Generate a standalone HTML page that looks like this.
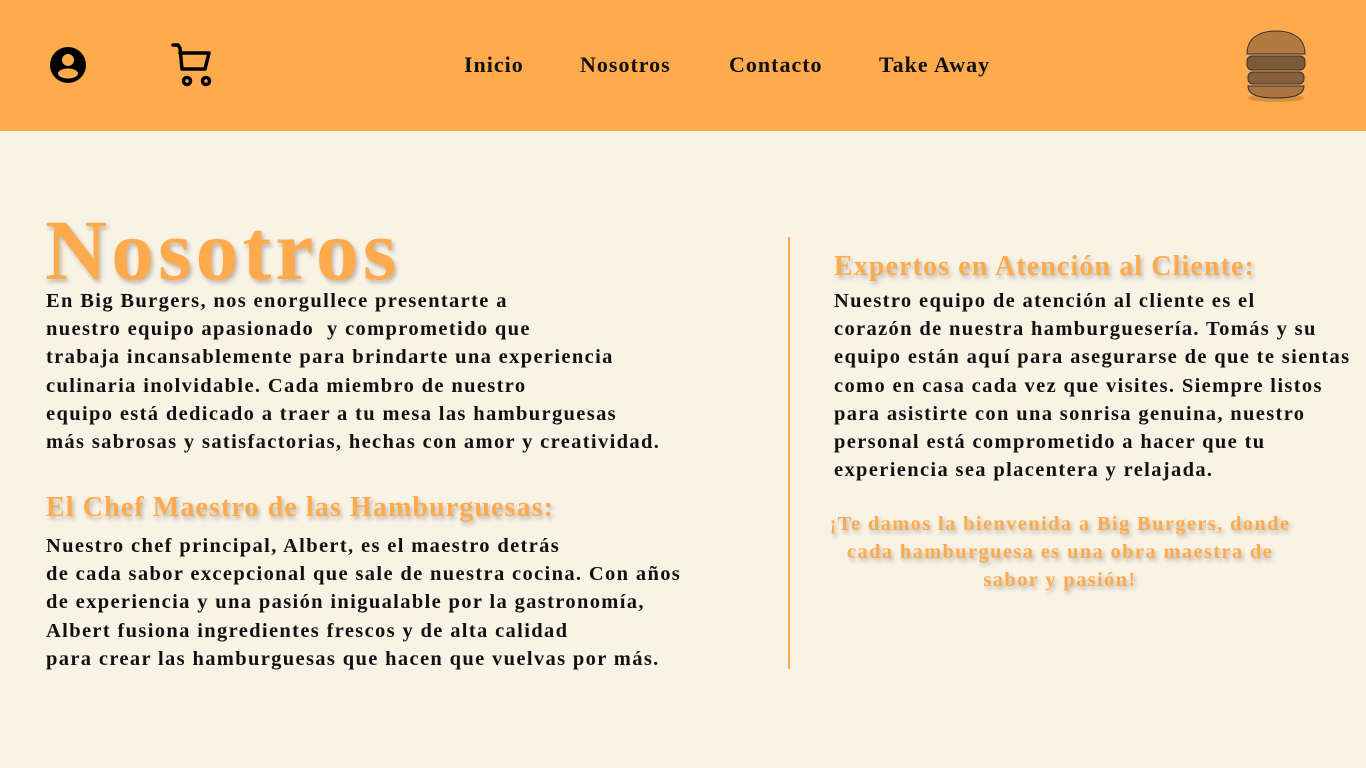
<!DOCTYPE html>
<html><head><meta charset="utf-8"><style>
*{margin:0;padding:0;box-sizing:border-box}
body{width:1366px;height:768px;background:#f9f3e6;font-family:"Liberation Serif",serif;overflow:hidden;position:relative;color:#111}
header{position:absolute;left:0;top:0;width:1366px;height:131px;background:#ffab4d}
nav a{position:absolute;top:52px;font-weight:bold;font-size:22px;letter-spacing:1px;color:#111;text-decoration:none}
.t{position:absolute;font-weight:bold;font-size:20.5px;letter-spacing:1.35px;line-height:28.2px;white-space:nowrap}
.o{color:#ffab4d;text-shadow:2px 3px 4px rgba(0,0,0,.25)}
.h{font-size:28px;letter-spacing:1.1px;line-height:34px}
</style></head><body>
<header>
<svg style="position:absolute;left:49px;top:46px" width="38" height="38" viewBox="0 0 38 38"><circle cx="19" cy="19" r="18" fill="#000"/><circle cx="19" cy="14" r="6" fill="#ffab4d"/><ellipse cx="19" cy="27.5" rx="10" ry="5" fill="#ffab4d"/></svg>
<svg style="position:absolute;left:166px;top:40px" width="52" height="50" viewBox="0 0 52 50" fill="none" stroke="#000" stroke-width="3.5" stroke-linecap="round" stroke-linejoin="round"><path d="M7 5h5l2 3l2 21h23l4-16H14"/><circle cx="21" cy="41" r="3.5"/><circle cx="40" cy="41" r="3.5"/></svg>
<nav><a style="left:464px">Inicio</a><a style="left:580px">Nosotros</a><a style="left:729px">Contacto</a><a style="left:879px">Take Away</a></nav>
<svg style="position:absolute;left:1244px;top:30px" width="64" height="72" viewBox="0 0 64 72"><ellipse cx="32" cy="68" rx="28" ry="4" fill="rgba(0,0,0,.15)"/><path d="M3 24C3 6 18 1 32 1s29 5 29 23z" fill="#b07a40" stroke="#333"/><rect x="3" y="26" width="58" height="14" rx="5" fill="#7a5a3a" stroke="#333"/><rect x="4" y="42" width="56" height="12" rx="5" fill="#86603c" stroke="#333"/><path d="M4 56h56c0 8-8 12-28 12S4 64 4 56z" fill="#a87540" stroke="#333"/></svg>
</header>
<div class="o" style="position:absolute;left:45px;top:200px;font-size:86px;letter-spacing:4px;font-weight:bold;line-height:100px">Nosotros</div>
<div class="t" style="left:46px;top:287px">En Big Burgers, nos enorgullece presentarte a<br>nuestro equipo apasionado &nbsp;y comprometido que<br>trabaja incansablemente para brindarte una experiencia<br>culinaria inolvidable. Cada miembro de nuestro<br>equipo está dedicado a traer a tu mesa las hamburguesas<br>más sabrosas y satisfactorias, hechas con amor y creatividad.</div>
<div class="t o h" style="left:46px;top:491px">El Chef Maestro de las Hamburguesas:</div>
<div class="t" style="left:46px;top:532px">Nuestro chef principal, Albert, es el maestro detrás<br>de cada sabor excepcional que sale de nuestra cocina. Con años<br>de experiencia y una pasión inigualable por la gastronomía,<br>Albert fusiona ingredientes frescos y de alta calidad<br>para crear las hamburguesas que hacen que vuelvas por más.</div>
<div style="position:absolute;left:788px;top:237px;width:2px;height:432px;background:#ffab4d"></div>
<div class="t o h" style="left:834px;top:250px">Expertos en Atención al Cliente:</div>
<div class="t" style="left:834px;top:287px">Nuestro equipo de atención al cliente es el<br>corazón de nuestra hamburguesería. Tomás y su<br>equipo están aquí para asegurarse de que te sientas<br>como en casa cada vez que visites. Siempre listos<br>para asistirte con una sonrisa genuina, nuestro<br>personal está comprometido a hacer que tu<br>experiencia sea placentera y relajada.</div>
<div class="t o" style="left:810px;top:510px;width:500px;text-align:center">¡Te damos la bienvenida a Big Burgers, donde<br>cada hamburguesa es una obra maestra de<br>sabor y pasión!</div>
</body></html>
